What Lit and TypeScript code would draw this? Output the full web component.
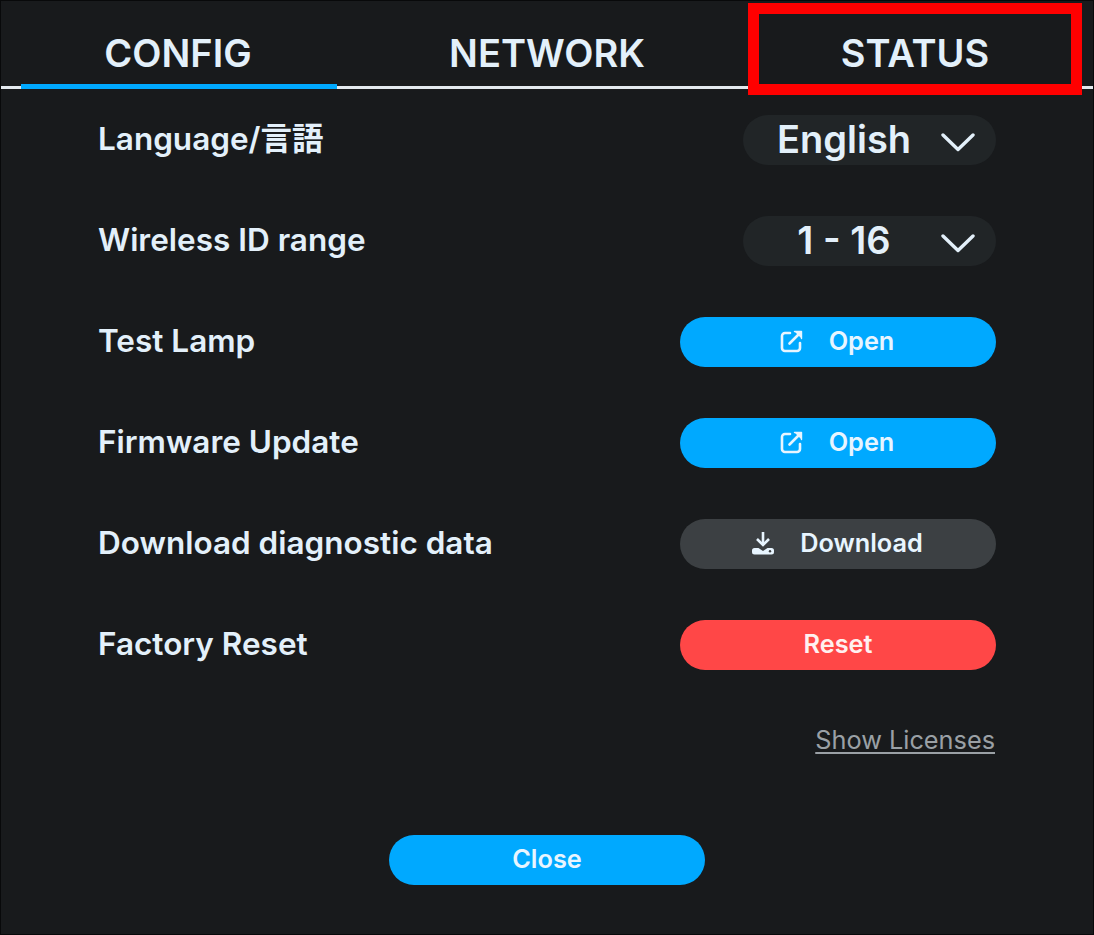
import { LitElement, html, css } from "lit";
import { customElement } from "lit/decorators.js";

const chevron = html`<svg class="chev" width="34" height="20" viewBox="0 0 34 20" fill="none" stroke="currentColor" stroke-width="3.400" stroke-linecap="round" stroke-linejoin="round"><path d="M2 3l15 14.500L32 3"/></svg>`;
const openIcon = html`<svg width="24" height="24" viewBox="0 0 24 24" fill="none" stroke="currentColor" stroke-width="2.600" stroke-linecap="round" stroke-linejoin="round"><path d="M10 4H5a3 3 0 0 0-3 3v12a3 3 0 0 0 3 3h12a3 3 0 0 0 3-3v-5"/><path d="M9.500 14.500L19 5"/><path d="M14.500 2.500h7v7" fill="currentColor" stroke-width="1.400"/></svg>`;
const dlIcon = html`<svg width="24" height="24" viewBox="0 0 24 24"><path d="M12 1v11" stroke="currentColor" stroke-width="2.600" fill="none"/><path d="M6 8l6 6 6-6" stroke="currentColor" stroke-width="2.600" fill="none"/><path d="M3.500 17h4l4.500 3 4.500-3h4a2.500 2.500 0 0 1 2.500 2.500V21a2.500 2.500 0 0 1-2.500 2.500h-17A2.500 2.500 0 0 1 1 21v-1.500A2.500 2.500 0 0 1 3.500 17z" fill="currentColor"/><circle cx="19" cy="20.300" r="1.200" fill="#3c4043"/></svg>`;

@customElement("app-root")
export class AppRoot extends LitElement {
  static styles = css`
    :host {
      display: block;
      width: 1094px;
      height: 935px;
      box-sizing: border-box;
      position: relative;
      background: #181a1c;
      border: 1px solid #08090a;
      color: #e3f0fa;
      font-family: Inter, "Noto Sans CJK JP", sans-serif;
      overflow: hidden;
    }
    .tabs {
      display: flex;
      gap: 52px;
      height: 88px;
      box-sizing: border-box;
      padding: 0 20px;
      border-bottom: 3px solid #e3e9ee;
    }
    .tab {
      width: 316px;
      height: 88px;
      box-sizing: border-box;
      padding-top: 27px;
      line-height: 50px;
      font-size: 38px;
      font-weight: 600;
      text-align: center;
      flex: none;
    }
    .tab.active {
      border-bottom: 5px solid #00a9ff;
    }
    .tab.active span {
      position: relative;
      left: -1px;
    }
    .rows {
      display: flex;
      flex-direction: column;
      gap: 51px;
      padding: 26px 97px 0;
    }
    .row {
      display: flex;
      align-items: center;
      justify-content: space-between;
      height: 50px;
    }
    .label {
      font-size: 31.500px;
      line-height: 38px;
      font-weight: 600;
      white-space: nowrap;
      padding-bottom: 2px;
    }
    .select {
      width: 253px;
      height: 50px;
      border-radius: 25px;
      background: #212527;
      display: grid;
      grid-template-columns: 202px 34px;
      align-items: center;
      font-size: 38px;
      font-weight: 600;
      text-align: center;
    }
    .select span {
      padding-bottom: 2px;
    }
    .chev {
      display: block;
      margin: 4px 0 0 -4px;
    }
    .btn {
      width: 316px;
      height: 50px;
      border-radius: 25px;
      display: flex;
      align-items: center;
      justify-content: center;
      gap: 25px;
      font-size: 25.300px;
      font-weight: 600;
      color: #e8f5ff;
      box-sizing: border-box;
      padding-bottom: 3px;
    }
    .btn.ic {
      padding-right: 2px;
    }
    .btn svg { flex: none; display: block; }
    .blue { background: #00a9ff; }
    .grey { background: #3c4043; }
    .red { background: #ff4747; color: #fff0f0; }
    .lic {
      display: flex;
      justify-content: flex-end;
      padding: 55px 98px 0;
    }
    .lic span {
      font-size: 25.300px;
      color: #9aa0a5;
      text-decoration: underline;
      text-underline-offset: 3px;
      line-height: 30px;
    }
    .foot {
      display: flex;
      justify-content: center;
      padding-top: 80px;
    }
    .marker {
      position: absolute;
      left: 747px;
      top: 2px;
      width: 334px;
      height: 92px;
      box-sizing: border-box;
      border: 11px solid #ff0000;
    }
  `;

  render() {
    return html`
      <div class="tabs">
        <div class="tab active"><span>CONFIG</span></div>
        <div class="tab">NETWORK</div>
        <div class="tab">STATUS</div>
      </div>
      <div class="rows">
        <div class="row">
          <div class="label">Language/言語</div>
          <div class="select"><span>English</span>${chevron}</div>
        </div>
        <div class="row">
          <div class="label">Wireless ID range</div>
          <div class="select"><span>1 - 16</span>${chevron}</div>
        </div>
        <div class="row">
          <div class="label">Test Lamp</div>
          <div class="btn ic blue">${openIcon}<span>Open</span></div>
        </div>
        <div class="row">
          <div class="label">Firmware Update</div>
          <div class="btn ic blue">${openIcon}<span>Open</span></div>
        </div>
        <div class="row">
          <div class="label">Download diagnostic data</div>
          <div class="btn ic grey">${dlIcon}<span>Download</span></div>
        </div>
        <div class="row">
          <div class="label">Factory Reset</div>
          <div class="btn red"><span>Reset</span></div>
        </div>
      </div>
      <div class="lic"><span>Show Licenses</span></div>
      <div class="foot"><div class="btn blue">Close</div></div>
      <div class="marker"></div>
    `;
  }
}
